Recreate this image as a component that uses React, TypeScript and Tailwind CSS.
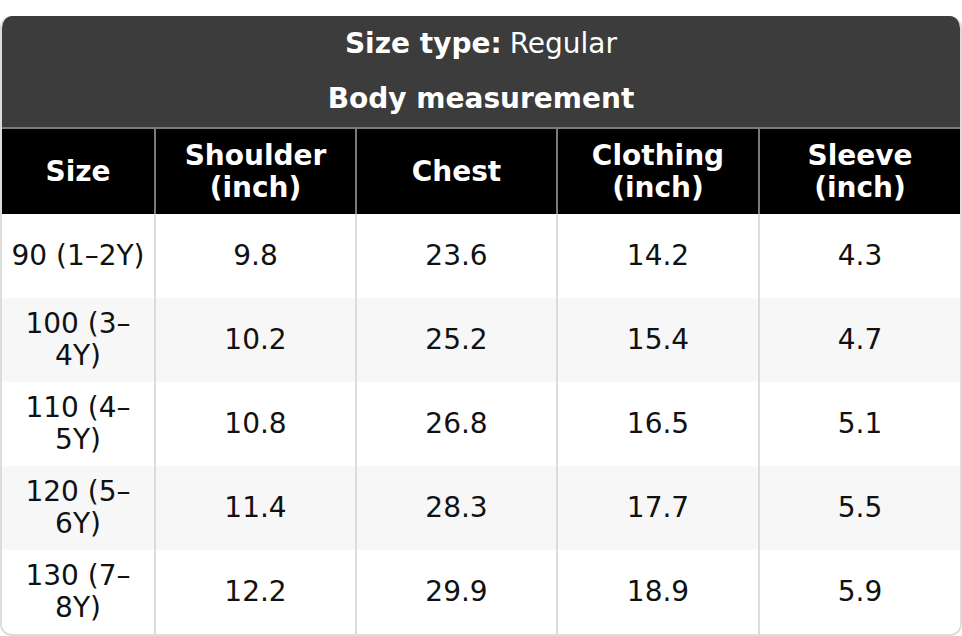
const columns = ['Size', 'Shoulder (inch)', 'Chest', 'Clothing (inch)', 'Sleeve (inch)'];

const rows: string[][] = [
  ['90 (1–2Y)', '9.8', '23.6', '14.2', '4.3'],
  ['100 (3–4Y)', '10.2', '25.2', '15.4', '4.7'],
  ['110 (4–5Y)', '10.8', '26.8', '16.5', '5.1'],
  ['120 (5–6Y)', '11.4', '28.3', '17.7', '5.5'],
  ['130 (7–8Y)', '12.2', '29.9', '18.9', '5.9'],
];

const grid = 'grid grid-cols-[152px_201px_201px_202px_1fr]';

export default function App() {
  return (
    <div
      className="w-[962px] h-[636px] bg-white pt-4 text-[28px] leading-[32px]"
      style={{ fontFamily: '"DejaVu Sans", "Liberation Sans", sans-serif' }}
    >
      <div className="rounded-xl overflow-hidden border-x-2 border-b-2 border-[#dcdcdc] bg-white">
        {/* caption */}
        <div className="bg-[#3c3c3c] text-white text-center">
          <div className="h-[55px] flex items-center justify-center">
            <span className="font-bold">Size type:</span>
            <span className="ml-2">Regular</span>
          </div>
          <div className="h-[56px] flex items-center justify-center font-bold">Body measurement</div>
        </div>

        {/* column header */}
        <div className={`${grid} bg-black text-white font-bold border-t-2 border-[#7a7a7a] h-[87px]`}>
          {columns.map((c, i) => (
            <div
              key={c}
              className={`flex items-center justify-center text-center px-2 ${i > 0 ? 'border-l-2 border-[#7a7a7a]' : ''}`}
            >
              {c}
            </div>
          ))}
        </div>

        {/* body */}
        {rows.map((r, ri) => (
          <div key={r[0]} className={`${grid} h-[84px] text-[#111] ${ri % 2 === 1 ? 'bg-[#f7f7f7]' : 'bg-white'}`}>
            {r.map((v, i) => (
              <div
                key={i}
                className={`flex items-center justify-center text-center px-2 ${i > 0 ? 'border-l-2 border-[#dcdcdc]' : ''}`}
              >
                {v}
              </div>
            ))}
          </div>
        ))}
      </div>
    </div>
  );
}
